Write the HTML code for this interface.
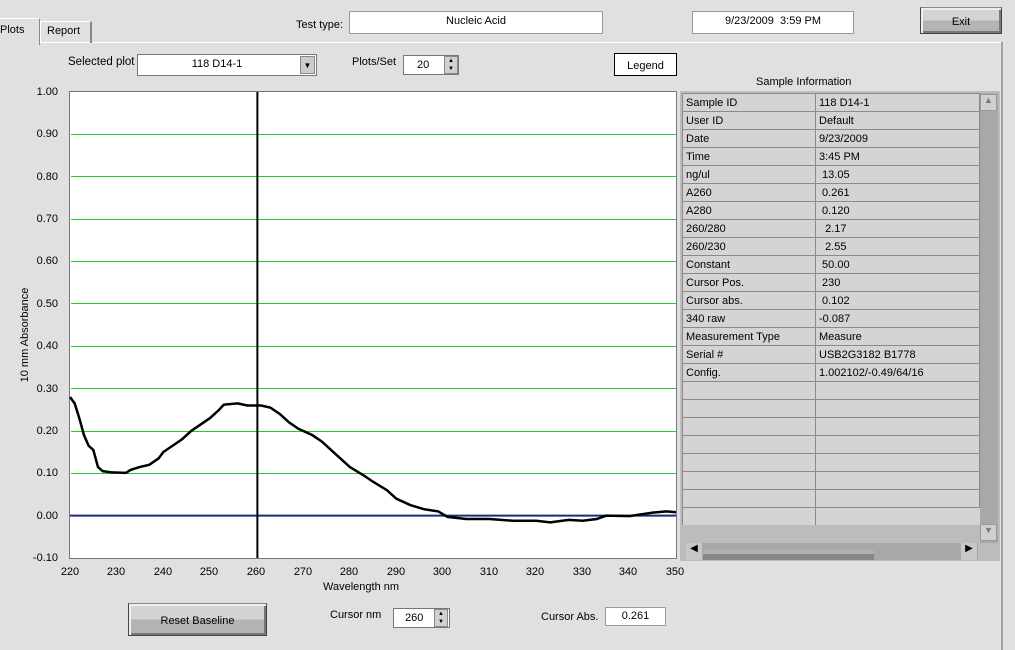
<!DOCTYPE html><html><head><style>
body{margin:0;width:1015px;height:650px;background:#e0e0e0;font-family:"Liberation Sans",Arial,sans-serif;font-size:11px;color:#000;position:relative;overflow:hidden}
.a{position:absolute}
.box{position:absolute;background:#fff;border:1px solid #9a9a9a;text-align:center;box-sizing:border-box}
.btn{position:absolute;background:linear-gradient(#d4d4d4 50%,#b4b4b4 50%);border:1px solid #444;border-top-color:#888;box-shadow:inset 2px 2px 0 #eee,inset -2px -2px 0 #777;text-align:center;box-sizing:border-box}
.yl{position:absolute;left:30px;width:28px;text-align:right}
.xl{position:absolute;top:566px;width:30px;text-align:center}
.g{position:absolute;left:71px;width:605px;height:1px;background:#22cc22}
table{border-collapse:collapse}
td{height:17px;border:1px solid #8a8a8a;padding:0 0 0 3px;font-size:11px;background:#d4d4d4}
.spin{position:absolute;width:14px;background:#d0d0d0;border:1px solid #888;box-sizing:border-box;font-size:6px;line-height:8px;text-align:center}
</style></head><body>
<div class="a" style="left:0;top:42px;width:1001px;height:1px;background:#fff"></div>
<div class="a" style="left:1001px;top:42px;width:2px;height:608px;background:#a0a0a0"></div>
<div class="a" style="left:-2px;top:18px;width:40px;height:26px;background:#e0e0e0;border:1px solid #fff;border-bottom:none;border-right-color:#888"></div>
<div class="a" style="left:0;top:24px">Plots</div>
<div class="a" style="left:40px;top:21px;width:49px;height:21px;border:1px solid #fff;border-bottom:none;border-right:2px solid #888"></div>
<div class="a" style="left:47px;top:25px">Report</div>
<div class="a" style="left:296px;top:19px">Test type:</div>
<div class="box" style="left:349px;top:11px;width:254px;height:23px;padding-top:3px">Nucleic Acid</div>
<div class="box" style="left:692px;top:11px;width:162px;height:23px;padding-top:3px">9/23/2009&nbsp; 3:59 PM</div>
<div class="btn" style="left:920px;top:7px;width:82px;height:27px;padding-top:8px">Exit</div>
<div class="a" style="left:68px;top:56px;font-size:11.5px">Selected plot</div>
<div class="box" style="left:137px;top:54px;width:180px;height:22px;padding:3px 20px 0 0;border-color:#777">118 D14-1</div>
<div class="a" style="left:300px;top:56px;width:15px;height:18px;background:#ccc;border:1px solid #888;box-sizing:border-box;font-size:8px;text-align:center;line-height:18px">▼</div>
<div class="a" style="left:352px;top:56px">Plots/Set</div>
<div class="box" style="left:403px;top:55px;width:56px;height:20px;text-align:left;padding:3px 0 0 13px;border-color:#777">20</div>
<div class="spin" style="left:444px;top:56px;height:18px">▲<br>▼</div>
<div class="box" style="left:614px;top:53px;width:63px;height:23px;border:1px solid #000;padding-top:6px">Legend</div>
<div class="a" style="left:756px;top:76px">Sample Information</div>
<div class="yl" style="top:86px">1.00</div><div class="yl" style="top:128px">0.90</div><div class="yl" style="top:171px">0.80</div><div class="yl" style="top:213px">0.70</div><div class="yl" style="top:255px">0.60</div><div class="yl" style="top:298px">0.50</div><div class="yl" style="top:340px">0.40</div><div class="yl" style="top:383px">0.30</div><div class="yl" style="top:425px">0.20</div><div class="yl" style="top:467px">0.10</div><div class="yl" style="top:510px">0.00</div><div class="yl" style="top:552px">-0.10</div>
<div class="a" style="left:-30px;top:329px;width:110px;transform:rotate(-90deg);text-align:center">10 mm Absorbance</div>
<div class="xl" style="left:55px">220</div><div class="xl" style="left:101px">230</div><div class="xl" style="left:148px">240</div><div class="xl" style="left:194px">250</div><div class="xl" style="left:241px">260</div><div class="xl" style="left:288px">270</div><div class="xl" style="left:334px">280</div><div class="xl" style="left:381px">290</div><div class="xl" style="left:427px">300</div><div class="xl" style="left:474px">310</div><div class="xl" style="left:520px">320</div><div class="xl" style="left:567px">330</div><div class="xl" style="left:613px">340</div><div class="xl" style="left:660px">350</div>
<div class="a" style="left:323px;top:581px">Wavelength nm</div>
<div class="a" style="left:69px;top:91px;width:608px;height:468px;background:#fff;border:1px solid #777;box-sizing:border-box"></div>
<div class="g" style="top:134px"></div><div class="g" style="top:176px"></div><div class="g" style="top:219px"></div><div class="g" style="top:261px"></div><div class="g" style="top:303px"></div><div class="g" style="top:346px"></div><div class="g" style="top:388px"></div><div class="g" style="top:431px"></div><div class="g" style="top:473px"></div>
<svg class="a" style="left:69px;top:91px" width="609" height="469">
<g transform="translate(1,467) scale(4.6615,-423.6) translate(-220,0.1)" fill="none">
<path d="M220 0H350" stroke="#1a2a80" stroke-width="2" vector-effect="non-scaling-stroke"/>
<path d="M220 0.28L221 0.265L222 0.23L223 0.19L224 0.165L225 0.155L226 0.115L227 0.105L229 0.102L232 0.101L233 0.108L235 0.115L237 0.12L239 0.135L240 0.15L242 0.165L244 0.18L246 0.2L248 0.215L250 0.23L252 0.25L253 0.262L256 0.265L258 0.26L261 0.26L263 0.255L265 0.24L267 0.22L269 0.205L272 0.19L274 0.175L276 0.155L278 0.135L280 0.115L283 0.095L285 0.08L288 0.06L290 0.04L293 0.025L296 0.015L299 0.01L301 -0.003L305 -0.008L310 -0.008L315 -0.012L320 -0.012L323 -0.016L327 -0.01L330 -0.012L333 -0.008L335 0L340 -0.001L345 0.007L348 0.01L350 0.008" stroke="#000" stroke-width="2.5" vector-effect="non-scaling-stroke"/>
<path d="M260.2 -0.1V1" stroke="#000" stroke-width="2" vector-effect="non-scaling-stroke"/>
</g></svg>
<div class="a" style="left:680px;top:91px;width:320px;height:470px;background:#bcbcbc"></div>
<table class="a" style="left:682px;top:93px;width:298px">
<tr><td style="width:129px">Sample ID</td><td>118 D14-1</td></tr>
<tr><td>User ID</td><td>Default</td></tr><tr><td>Date</td><td>9/23/2009</td></tr><tr><td>Time</td><td>3:45 PM</td></tr>
<tr><td>ng/ul</td><td>&nbsp;13.05</td></tr><tr><td>A260</td><td>&nbsp;0.261</td></tr><tr><td>A280</td><td>&nbsp;0.120</td></tr>
<tr><td>260/280</td><td>&nbsp; 2.17</td></tr><tr><td>260/230</td><td>&nbsp; 2.55</td></tr><tr><td>Constant</td><td>&nbsp;50.00</td></tr>
<tr><td>Cursor Pos.</td><td>&nbsp;230</td></tr><tr><td>Cursor abs.</td><td>&nbsp;0.102</td></tr><tr><td>340 raw</td><td>-0.087</td></tr>
<tr><td>Measurement Type</td><td>Measure</td></tr><tr><td>Serial #</td><td>USB2G3182 B1778</td></tr><tr><td>Config.</td><td>1.002102/-0.49/64/16</td></tr>
<tr><td></td><td></td></tr><tr><td></td><td></td></tr><tr><td></td><td></td></tr><tr><td></td><td></td></tr><tr><td></td><td></td></tr><tr><td></td><td></td></tr><tr><td></td><td></td></tr>
<tr><td style="border-bottom:none"></td><td style="border-bottom:none;border-right:none"></td></tr>
</table>
<div class="a" style="left:980px;top:93px;width:18px;height:450px;background:#a8a8a8"></div>
<div class="a" style="left:980px;top:94px;width:17px;height:17px;background:#d0d0d0;border:1px solid #999;box-sizing:border-box;font-size:9px;color:#777;text-align:center">▲</div>
<div class="a" style="left:980px;top:524px;width:17px;height:17px;background:#d0d0d0;border:1px solid #999;box-sizing:border-box;font-size:9px;color:#777;text-align:center">▼</div>
<div class="a" style="left:686px;top:543px;width:292px;height:17px;background:#a8a8a8"></div>
<div class="a" style="left:703px;top:550px;width:171px;height:10px;background:#888;border-top:4px solid #b0b0b0;box-sizing:border-box"></div>
<div class="a" style="left:686px;top:543px;width:16px;height:17px;background:#c8c8c8;font-size:10px;text-align:center">◀</div>
<div class="a" style="left:961px;top:543px;width:16px;height:17px;background:#c8c8c8;font-size:10px;text-align:center">▶</div>
<div class="btn" style="left:128px;top:603px;width:139px;height:33px;padding-top:11px">Reset Baseline</div>
<div class="a" style="left:330px;top:609px">Cursor nm</div>
<div class="box" style="left:393px;top:608px;width:57px;height:20px;text-align:left;padding:3px 0 0 11px;border-color:#777">260</div>
<div class="spin" style="left:434px;top:609px;height:18px">▲<br>▼</div>
<div class="a" style="left:541px;top:611px">Cursor Abs.</div>
<div class="box" style="left:605px;top:607px;width:61px;height:19px;padding-top:2px">0.261</div>
</body></html>
